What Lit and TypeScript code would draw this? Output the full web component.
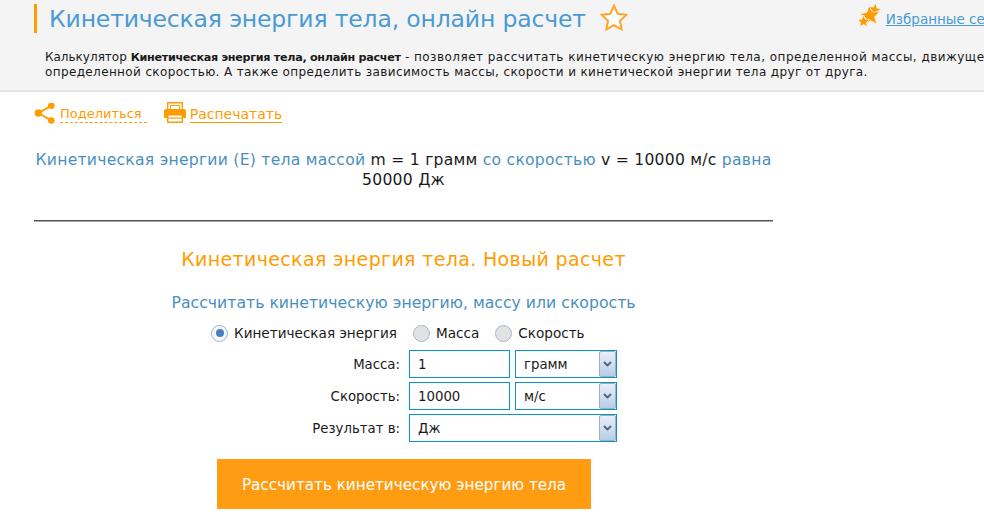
import { LitElement, html, css, svg } from "lit";
import { customElement } from "lit/decorators.js";

const STAR = "M12 1.5l3.2 6.9 7.3.9-5.4 5.1 1.4 7.4L12 18.2l-6.5 3.6 1.4-7.4L1.5 9.3l7.3-.9z";

function starPoints(cx: number, cy: number, R: number, rot = 0) {
  const pts: string[] = [];
  for (let i = 0; i < 10; i++) {
    const rad = i % 2 ? R * 0.45 : R;
    const a = -Math.PI / 2 + rot + (i * Math.PI) / 5;
    pts.push(`${(cx + rad * Math.cos(a)).toFixed(2)},${(cy + rad * Math.sin(a)).toFixed(2)}`);
  }
  return pts.join(" ");
}

@customElement("app-root")
export class AppRoot extends LitElement {
  static styles = css`
    :host {
      display: block;
      width: 984px;
      height: 519px;
      overflow: hidden;
      background: #fff;
      font-family: "DejaVu Sans", Tahoma, sans-serif;
      color: #1a1a1a;
    }
    .head {
      background: #f4f4f4;
      border-bottom: 2px solid #e4e4e4;
      height: 92px;
      box-sizing: border-box;
      padding: 4px 0 0 34px;
      width: 984px;
      overflow: hidden;
    }
    .title-row {
      display: flex;
      align-items: flex-start;
      white-space: nowrap;
      height: 29px;
    }
    h1 {
      margin: 0;
      height: 29px;
      border-left: 3px solid #ff9c00;
      padding-left: 12px;
      font-size: 23.5px;
      line-height: 30px;
      font-weight: 400;
      color: #4a9ad4;
      letter-spacing: -0.16px;
    }
    .star { margin: 0 0 0 14px; flex: none; }
    .fav {
      display: flex;
      align-items: flex-end;
      margin-left: 229px;
      font-size: 13.5px;
      color: #4a9ad4;
      gap: 5px;
    }
    .fav span { text-decoration: underline; margin-bottom: 1px; }
    .desc {
      margin: 17px 0 0 11px;
      font-size: 12px;
      line-height: 14px;
      letter-spacing: 0.37px;
      white-space: nowrap;
      color: #1a1a1a;
    }
    .desc .lead { letter-spacing: 0; }
    .desc .rest { letter-spacing: 0.47px; }
    .desc strong { font-size: 11.2px; letter-spacing: -0.3px; }
    .tools {
      display: flex;
      align-items: center;
      padding: 10px 0 0 34px;
      height: 34px;
      box-sizing: border-box;
      color: #ff9c00;
    }
    .tools svg { flex: none; }
    .share { margin-left: 4px; border-bottom: 1px dashed #ff9c00; padding-right: 5px; line-height: 16px; font-size: 13px; }
    .print { margin-left: 4px; border-bottom: 1px solid #ff9c00; line-height: 16px; font-size: 14px; }
    .printicon { margin: -2px 0 0 17px; }
    .main {
      width: 739px;
      margin-left: 34px;
    }
    .result {
      margin-top: 24px;
      text-align: center;
      font-size: 15.6px;
      letter-spacing: 0.25px;
      line-height: 20px;
      color: #4a8fc0;
      padding-bottom: 30px;
      border-bottom: 1px solid #555;
      box-shadow: 0 1px 0 #aaa;
    }
    .result b { font-weight: 400; color: #1a1a1a; }
    h2 {
      margin: 25px 0 0;
      text-align: center;
      font-weight: 400;
      font-size: 19px;
      line-height: 26px;
      letter-spacing: 0.35px;
      color: #ff9c00;
    }
    h3 {
      margin: 21px 0 0;
      text-align: center;
      font-weight: 400;
      font-size: 15.7px;
      line-height: 20px;
      color: #4a8fc0;
    }
    .radios {
      display: flex;
      margin: 10px 0 0 177px;
      font-size: 13.6px;
      line-height: 20px;
      height: 20px;
      align-items: center;
      color: #1a1a1a;
    }
    .radio { display: flex; align-items: center; gap: 6px; margin-right: 16px; }
    .dot {
      width: 17px;
      height: 17px;
      border-radius: 50%;
      box-sizing: border-box;
      border: 1.5px solid #a3b8cc;
      background: #e2e2e2;
      display: flex;
      align-items: center;
      justify-content: center;
      flex: none;
    }
    .dot.on { background: #f4f6f8; border-color: #9db5d0; }
    .dot.on::after {
      content: "";
      width: 8px;
      height: 8px;
      border-radius: 50%;
      background: #4a7fbf;
    }
    .form {
      margin: 7px 0 0 0;
      display: grid;
      grid-template-columns: 370px 101px 102px;
      grid-auto-rows: 28px;
      column-gap: 5px;
      row-gap: 4px;
      font-size: 13.3px;
    }
    .form label { text-align: right; height: 28px; line-height: 30px; padding-right: 4px; color: #1a1a1a; }
    .field {
      height: 28px;
      box-sizing: border-box;
      border: 1px solid #0b94c8;
      background: #fff;
      line-height: 28px;
      padding-left: 8px;
      position: relative;
      color: #1a1a1a;
    }
    .wide { grid-column: 2 / span 2; }
    .arrow {
      position: absolute;
      top: 0;
      right: 0;
      width: 17px;
      height: 26px;
      box-sizing: border-box;
      border: 1px solid #a4aeb8;
      border-radius: 2px;
      background: linear-gradient(#e8eef7 0%, #d6e1f0 40%, #b6cce6 100%);
      display: flex;
      align-items: center;
      justify-content: center;
    }
    .btn {
      width: 374px;
      height: 50px;
      margin: 17px 0 0 183px;
      background: #ff9c12;
      color: #fff;
      text-align: center;
      line-height: 52px;
      font-size: 15.2px;
    }
  `;

  private select(text: string, wide = false) {
    return html`<div class="field ${wide ? "wide" : ""}">
      ${text}
      <span class="arrow"><svg width="9" height="6" viewBox="0 0 9 6">
        <path d="M1 1l3.500 3.500L8 1" fill="none" stroke="#4d6185" stroke-width="1.800"/>
      </svg></span>
    </div>`;
  }

  render() {
    return html`
      <div class="head">
        <div class="title-row">
          <h1>Кинетическая энергия тела, онлайн расчет</h1>
          <svg class="star" width="28" height="28" viewBox="0 0 24 24">
            <path d="${STAR}" fill="#fff" stroke="#ffa526" stroke-width="1.700"/>
          </svg>
          <a class="fav">
            <svg width="24" height="24" viewBox="0 0 24 24">
              ${svg`
                <polygon points="${starPoints(17.5, 6, 6, 0.2)}" fill="#ff9c00"/>
                <polygon points="${starPoints(13, 12, 10.5, -0.1)}" fill="#ff9c00" stroke="#f4f4f4" stroke-width=".8"/>
                <polygon points="${starPoints(6.5, 17.5, 6.5)}" fill="#ff9c00" stroke="#f4f4f4" stroke-width=".8"/>
              `}
            </svg>
            <span>Избранные сервисы</span>
          </a>
        </div>
        <div class="desc"><span class="lead">Калькулятор </span><strong>Кинетическая энергия тела, онлайн расчет</strong><span class="rest"> - позволяет рассчитать кинетическую энергию тела, определенной массы, движущегося с</span><br>определенной скоростью. А также определить зависимость массы, скорости и кинетической энергии тела друг от друга.</div>
      </div>
      <div class="tools">
        <svg width="22" height="22" viewBox="0 0 22 22">
          <path d="M17.300 2.800L4.300 10l13 7.500" fill="none" stroke="#ff9c00" stroke-width="2"/>
          <circle cx="4.300" cy="10" r="3.700" fill="#ff9c00"/>
          <circle cx="17.300" cy="2.800" r="3.300" fill="#ff9c00"/>
          <circle cx="17.300" cy="17.500" r="3.300" fill="#ff9c00"/>
        </svg>
        <span class="share">Поделиться</span>
        <svg class="printicon" width="22" height="22" viewBox="0 0 22 22">
          <path d="M3.700 .7h14.600v7.500H3.700z" fill="#fff" stroke="#ff9c00" stroke-width="1.400"/>
          <path d="M6.500 3.500h9v4h-9z" fill="#fff" stroke="#ff9c00" stroke-width="1"/>
          <path d="M2 7h18a2 2 0 0 1 2 2v7h-3.500v-3h-15v3H0V9a2 2 0 0 1 2-2z" fill="#ff9c00"/>
          <path d="M3.700 12.800h14.600v7.500H3.700z" fill="#fff" stroke="#ff9c00" stroke-width="1.400"/>
          <path d="M4 15.500h14v1.200H4z" fill="#ff9c00"/>
        </svg>
        <span class="print">Распечатать</span>
      </div>
      <div class="main">
        <div class="result">Кинетическая энергии (E) тела массой <b>m = 1 грамм</b> со скоростью <b>v = 10000 м/с</b> равна<br><b>50000 Дж</b></div>
        <h2>Кинетическая энергия тела. Новый расчет</h2>
        <h3>Рассчитать кинетическую энергию, массу или скорость</h3>
        <div class="radios">
          <span class="radio"><span class="dot on"></span>Кинетическая энергия</span>
          <span class="radio"><span class="dot"></span>Масса</span>
          <span class="radio"><span class="dot"></span>Скорость</span>
        </div>
        <div class="form">
          <label>Масса:</label><div class="field">1</div>${this.select("грамм")}
          <label>Скорость:</label><div class="field">10000</div>${this.select("м/с")}
          <label>Результат в:</label>${this.select("Дж", true)}
        </div>
        <div class="btn">Рассчитать кинетическую энергию тела</div>
      </div>
    `;
  }
}
